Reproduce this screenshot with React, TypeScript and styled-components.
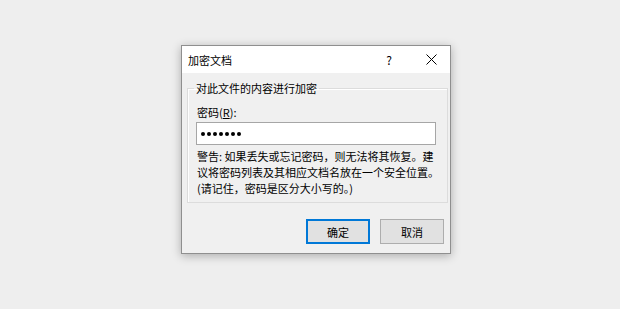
import React from 'react'
import styled, { createGlobalStyle } from 'styled-components'

const GlobalStyle = createGlobalStyle`
  html, body {
    margin: 0;
    padding: 0;
    background: #eeeeee;
  }
  body {
    width: 620px;
    height: 309px;
    font-family: 'Noto Sans CJK SC', 'Noto Sans', sans-serif;
    font-size: 11px;
    color: #000;
  }
`

const Page = styled.div`
  display: flex;
  padding: 45px 0 0 181px;
`

const Dialog = styled.div`
  width: 268px;
  border: 1px solid #8f8f8f;
  background: #f0f0f0;
  box-shadow: 0 2px 9px rgba(0, 0, 0, 0.28);
  display: flex;
  flex-direction: column;
`

const TitleBar = styled.div`
  height: 27px;
  background: #ffffff;
  display: flex;
  align-items: center;
  padding-left: 6px;
`

const Title = styled.div`
  flex: 1;
  font-size: 11px;
  line-height: 16px;
`

const TitleButton = styled.div<{ w: number }>`
  width: ${({ w }) => w}px;
  height: 27px;
  display: flex;
  align-items: center;
  justify-content: center;
  font-size: 12px;
`

const Body = styled.div`
  padding: 7px 5px 9px 5px;
  display: flex;
  flex-direction: column;
`

const Group = styled.fieldset`
  margin: 0;
  padding: 0 8px 6px 8px;
  border: 1px solid #dcdcdc;
  box-shadow: inset 1px 1px 0 #ffffff;
  display: flex;
  flex-direction: column;
`

const Legend = styled.legend`
  padding: 0 2px;
  margin-left: -2px;
  line-height: 16px;
`

const Label = styled.div`
  margin-top: 8px;
  margin-left: 1px;
  line-height: 16px;
`

const Mnemonic = styled.span`
  text-decoration: underline;
`

const PasswordBox = styled.div`
  margin-top: 2px;
  height: 21px;
  width: 234px;
  border: 1px solid #a6a6a6;
  background: #ffffff;
  display: flex;
  align-items: center;
  gap: 2px;
  padding-left: 4px;
`

const Dot = styled.span`
  width: 4px;
  height: 4px;
  border-radius: 50%;
  background: #000;
`

const Warning = styled.div`
  margin-top: 3px;
  margin-left: 1px;
  line-height: 16px;
  white-space: nowrap;
`

const ButtonRow = styled.div`
  display: flex;
  justify-content: flex-end;
  gap: 10px;
  margin-top: 16px;
  padding-right: 1px;
`

const Button = styled.div<{ primary?: boolean }>`
  box-sizing: border-box;
  width: 64px;
  height: 25px;
  display: flex;
  align-items: center;
  justify-content: center;
  background: #e1e1e1;
  border: ${({ primary }) => (primary ? '2px solid #0078d7' : '1px solid #adadad')};
  line-height: 16px;
`

const CloseIcon = () => (
  <svg width="11" height="11" viewBox="0 0 11 11">
    <path d="M0.5 0.5 L10.5 10.5 M10.5 0.5 L0.5 10.5" stroke="#000" strokeWidth="1" fill="none" />
  </svg>
)

const App: React.FC = () => (
  <Page>
    <GlobalStyle />
    <Dialog>
      <TitleBar>
        <Title>加密文档</Title>
        <TitleButton w={36}>?</TitleButton>
        <TitleButton w={5} />
        <TitleButton w={38}>
          <CloseIcon />
        </TitleButton>
      </TitleBar>
      <Body>
        <Group>
          <Legend>对此文件的内容进行加密</Legend>
          <Label>
            密码(<Mnemonic>R</Mnemonic>):
          </Label>
          <PasswordBox>
            {Array.from({ length: 7 }).map((_, i) => (
              <Dot key={i} />
            ))}
          </PasswordBox>
          <Warning>
            警告: 如果丢失或忘记密码，则无法将其恢复。建
            <br />
            议将密码列表及其相应文档名放在一个安全位置。
            <br />
            (请记住，密码是区分大小写的。)
          </Warning>
        </Group>
        <ButtonRow>
          <Button primary>确定</Button>
          <Button>取消</Button>
        </ButtonRow>
      </Body>
    </Dialog>
  </Page>
)

export default App
